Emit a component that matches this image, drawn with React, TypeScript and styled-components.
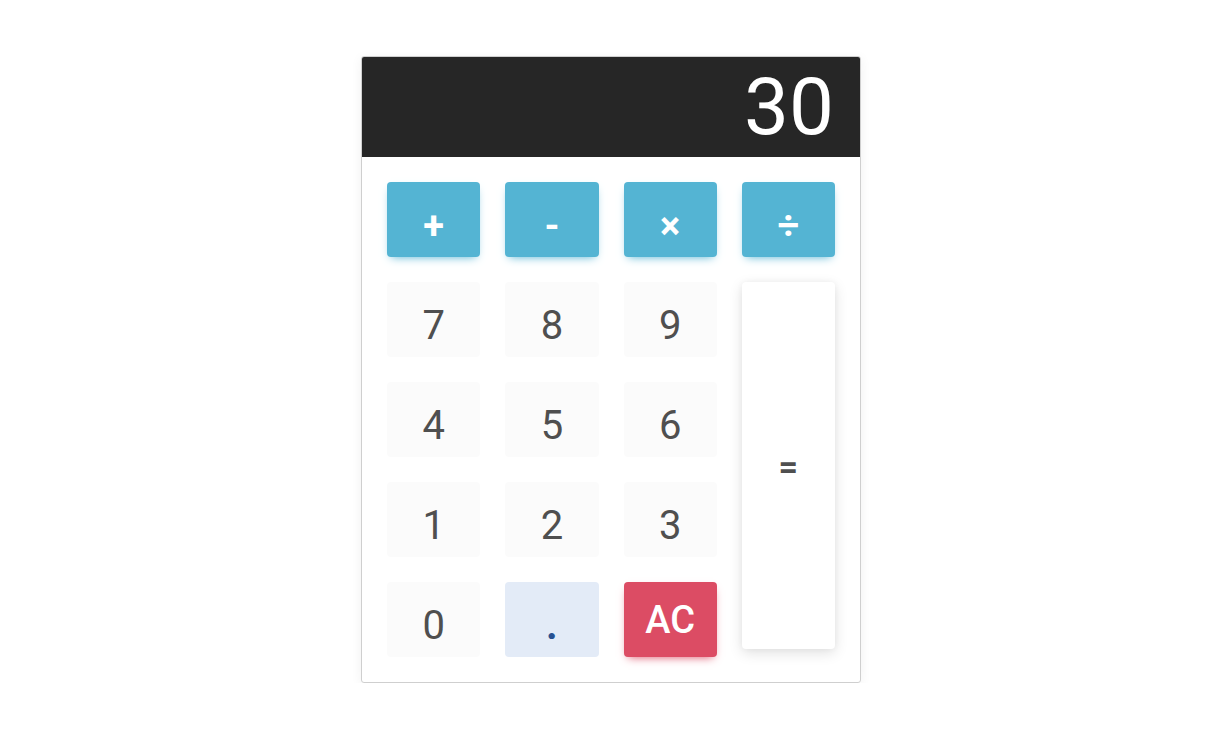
import React from "react";
import styled, { createGlobalStyle, css } from "styled-components";

const Global = createGlobalStyle`
  html, body { margin: 0; padding: 0; background: #ffffff; }
  body { font-family: Roboto, "Liberation Sans", sans-serif; }
  * { box-sizing: border-box; }
`;

const Page = styled.div`
  display: flex;
  justify-content: center;
  padding: 56px 0 0 11px;
`;

const Card = styled.div`
  width: 500px;
  border: 1px solid #cfcfcf;
  border-radius: 3px;
  background: #fff;
  box-shadow: 0 2px 12px rgba(0, 0, 0, 0.06);
  overflow: hidden;
`;

const Display = styled.div`
  height: 100px;
  background: #262626;
  color: #ffffff;
  font-family: Roboto, "Liberation Sans", sans-serif;
  font-weight: 400;
  font-size: 80px;
  line-height: 100px;
  text-align: right;
  padding-right: 26px;
`;

const Keys = styled.div`
  display: grid;
  grid-template-columns: repeat(4, 1fr);
  grid-auto-rows: 75px;
  gap: 25px;
  padding: 25px;
`;

type Variant = "op" | "num" | "dot" | "clear" | "equals";

const variants: Record<Variant, ReturnType<typeof css>> = {
  op: css`
    background: #54b4d3;
    color: #fff;
    font-weight: 700;
    font-size: 38px;
    padding-top: 12px;
    box-shadow: 0 4px 9px -4px #54b4d3;
  `,
  num: css`
    background: #fbfbfb;
    color: #4f4f4f;
    font-weight: 400;
    font-size: 40px;
    padding-top: 12px;
  `,
  dot: css`
    background: #e3ebf7;
    color: #285192;
    font-weight: 700;
    font-size: 40px;
    padding-top: 12px;
  `,
  clear: css`
    background: #dc4c64;
    color: #fff;
    font-weight: 500;
    font-size: 38px;
    box-shadow: 0 4px 9px -4px #dc4c64;
  `,
  equals: css`
    background: #fff;
    color: #4f4f4f;
    font-weight: 700;
    font-size: 34px;
    grid-row: span 4;
    align-self: start;
    height: 367px;
    box-shadow: 0 4px 14px rgba(0, 0, 0, 0.12), 0 0 6px rgba(0, 0, 0, 0.04);
  `,
};

const Key = styled.button<{ $variant: Variant }>`
  display: flex;
  align-items: center;
  justify-content: center;
  border: none;
  border-radius: 4px;
  margin: 0;
  padding: 0;
  font-family: Roboto, "Liberation Sans", sans-serif;
  line-height: 1;
  cursor: pointer;
  ${(p) => variants[p.$variant]}
`;

const rows: { label: string; v: Variant }[] = [
  { label: "+", v: "op" },
  { label: "-", v: "op" },
  { label: "×", v: "op" },
  { label: "÷", v: "op" },
  { label: "7", v: "num" },
  { label: "8", v: "num" },
  { label: "9", v: "num" },
  { label: "=", v: "equals" },
  { label: "4", v: "num" },
  { label: "5", v: "num" },
  { label: "6", v: "num" },
  { label: "1", v: "num" },
  { label: "2", v: "num" },
  { label: "3", v: "num" },
  { label: "0", v: "num" },
  { label: ".", v: "dot" },
  { label: "AC", v: "clear" },
];

export default function App() {
  return (
    <>
      <Global />
      <Page>
        <Card>
          <Display>30</Display>
          <Keys>
            {rows.map((k) => (
              <Key key={k.label} $variant={k.v}>
                {k.label}
              </Key>
            ))}
          </Keys>
        </Card>
      </Page>
    </>
  );
}
